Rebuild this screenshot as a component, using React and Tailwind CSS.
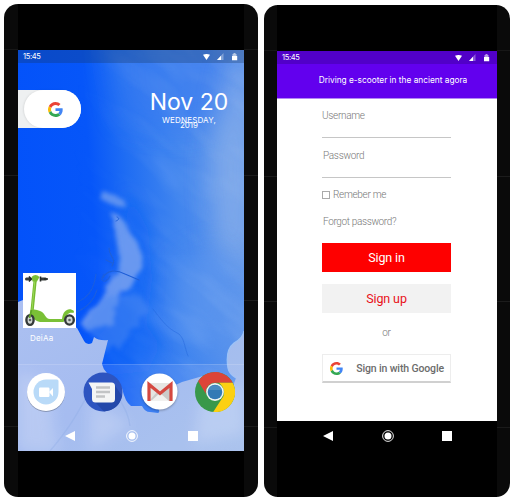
import React from 'react';

function GoogleG({ className }) {
  return (
    <svg viewBox="0 0 48 48" className={className}>
      <path fill="#EA4335" d="M24 9.5c3.54 0 6.71 1.22 9.21 3.6l6.85-6.85C35.9 2.38 30.47 0 24 0 14.62 0 6.51 5.38 2.56 13.22l7.98 6.19C12.43 13.72 17.74 9.5 24 9.5z" />
      <path fill="#4285F4" d="M46.98 24.55c0-1.57-.15-3.09-.38-4.55H24v9.02h12.94c-.58 2.96-2.26 5.48-4.78 7.18l7.73 6c4.51-4.18 7.09-10.36 7.09-17.65z" />
      <path fill="#FBBC05" d="M10.53 28.59A14.5 14.5 0 0 1 9.77 24c0-1.6.27-3.14.76-4.59l-7.98-6.19A23.9 23.9 0 0 0 0 24c0 3.88.92 7.54 2.56 10.78l7.97-6.19z" />
      <path fill="#34A853" d="M24 48c6.48 0 11.93-2.13 15.89-5.81l-7.73-6c-2.15 1.45-4.92 2.3-8.16 2.3-6.26 0-11.57-4.22-13.47-9.91l-7.98 6.19C6.51 42.62 14.62 48 24 48z" />
    </svg>
  );
}

function StatusBar({ className }) {
  return (
    <div className={`relative flex h-[13px] shrink-0 items-center justify-between text-white ${className}`}>
      <span className="text-[7.5px] leading-none font-[Inter,sans-serif] tracking-[-0.35px]">15:45</span>
      <svg viewBox="0 0 35 8" className="h-2 w-[35px]">
        <path fill="#fff" d="M0 1.8Q3.5 0 7 1.8L3.5 7z" />
        <path fill="#fff" opacity=".35" d="M20.5 0v7H14z" />
        <path fill="#fff" d="M18 2.8V7h-4z" />
        <path fill="#fff" opacity=".6" d="M29.5 1h1V0h2v1h1v2h-4z" />
        <path fill="#fff" d="M29 3h5.2v4.3H29z" />
      </svg>
    </div>
  );
}

function NavBar({ className }) {
  return (
    <div className={`relative flex shrink-0 items-center justify-between ${className}`}>
      <svg viewBox="0 0 10 10" className="size-[10px]"><path fill="#fff" d="M10 0v10L0 5z" /></svg>
      <svg viewBox="0 0 12 12" className="size-3">
        <circle cx="6" cy="6" r="5.4" fill="none" stroke="#fff" strokeWidth=".9" />
        <circle cx="6" cy="6" r="3.5" fill="#fff" />
      </svg>
      <div className="size-[10px] bg-white" />
    </div>
  );
}

function Seams() {
  return (
    <div className="absolute inset-0 flex flex-col pt-[45px]">
      <div className="h-[126px] shrink-0 border-t border-[#171717]" />
      <div className="h-[125px] shrink-0 border-t border-[#1c1c1c]" />
      <div className="h-[126px] shrink-0 border-t border-[#1c1c1c]" />
      <div className="border-t border-[#1a1a1a]" />
    </div>
  );
}

function Wallpaper() {
  return (
    <svg viewBox="18 50 226 401" className="absolute inset-0 size-full">
      <defs>
        <linearGradient id="sea" x1="0" y1=".5" x2="1" y2=".36">
          <stop offset="0" stopColor="#0352fa" />
          <stop offset=".34" stopColor="#0656f9" />
          <stop offset=".5" stopColor="#1f6df3" />
          <stop offset=".7" stopColor="#3f84ef" />
          <stop offset="1" stopColor="#6499ea" />
        </linearGradient>
        <linearGradient id="sand" x1="0" y1="0" x2="1" y2="1">
          <stop offset="0" stopColor="#acc0f1" />
          <stop offset=".5" stopColor="#a3bbef" />
          <stop offset="1" stopColor="#a9c3ec" />
        </linearGradient>
        <filter id="wisp" x="-30%" y="-30%" width="160%" height="160%">
          <feTurbulence type="fractalNoise" baseFrequency=".06" numOctaves="3" seed="5" result="n" />
          <feDisplacementMap in="SourceGraphic" in2="n" scale="14" />
          <feGaussianBlur stdDeviation="2.2" />
        </filter>
        <filter id="soft" x="-20%" y="-20%" width="140%" height="140%"><feGaussianBlur stdDeviation=".5" /></filter>
        <filter id="b4" x="-60%" y="-60%" width="220%" height="220%"><feGaussianBlur stdDeviation="7" /></filter>
        <filter id="b12" x="-80%" y="-50%" width="260%" height="200%"><feGaussianBlur stdDeviation="14" /></filter>
        <filter id="streaks" x="0" y="0" width="100%" height="100%">
          <feTurbulence type="fractalNoise" baseFrequency=".012 .04" numOctaves="3" seed="8" />
          <feColorMatrix values="0 0 0 0 .72  0 0 0 0 .83  0 0 0 0 1  1.6 0 0 0 -.65" />
        </filter>
        <linearGradient id="fade" x1="0" x2="1">
          <stop offset=".22" stopColor="#000" />
          <stop offset=".7" stopColor="#fff" />
        </linearGradient>
        <mask id="east" maskUnits="userSpaceOnUse" x="18" y="50" width="226" height="401">
          <path fill="url(#fade)" d="M18 50h226v401H18z" />
        </mask>
      </defs>
      <path fill="url(#sea)" d="M18 50h226v401H18z" />
      <path fill="#3a7cf0" filter="url(#b12)" d="M110 40h134v70l-60 20-60-10z" opacity=".6" />
      <path fill="#0f63f6" filter="url(#b4)" d="M128 190l20 40 4 50-6 45 14 20-12 26-40 4-16-30 16-20 16-50z" opacity=".6" />
      <path fill="#87aeea" filter="url(#b12)" d="M236 50h12v220l-30-20-6-90z" opacity=".9" />
      <path fill="#6098ee" filter="url(#b12)" d="M180 265l40-20 20 60-15 45-35-10-20-40z" opacity=".6" />
      <g mask="url(#east)" opacity=".16">
        <g transform="rotate(38 131 250)">
          <path d="M-150 -30h560v560h-560z" filter="url(#streaks)" />
        </g>
      </g>
      <path fill="#75a0f0" filter="url(#wisp)" d="M100 189c8 3 14 8 24 11l4 8c-9-1-18-3-27-9z" opacity=".75" />
      <path fill="#84a8ef" filter="url(#wisp)" d="M110 212c10 2 15 10 20 20 8 10 14 22 11 38-4 14-12 16-20 24-6 10-2 20-12 30l-22 6-6-6c12-8 20-20 22-32 4-14 16-20 17-34-2-18-6-26-10-46z" opacity=".75" />
      <path fill="#4b88f1" filter="url(#wisp)" d="M84 328c10-8 18-20 24-30l30-5 10 16-26 36-16 8-8-14z" opacity=".5" />
      <g fill="none" stroke="#1f5fd8" strokeLinecap="round" filter="url(#soft)">
        <path d="M103 278c4-9 14-8 22-4l14 6" strokeWidth="1.1" />
        <path d="M109 248c0 9 8 10 3 18M106 260l6 3" strokeWidth="1.2" />
        <path d="M117 217c3 1 2 3-1 4" strokeWidth="1" />
        <path d="M153 309c10 13 14 19 26 25 6 6 5 12 9 22" strokeWidth=".8" opacity=".5" />
        <path d="M78 302c12-6 16-14 18-28M77 312c11-5 17-12 20-22M104 274c-6 8 2 10 6 2" strokeWidth="1.2" opacity=".75" />
      </g>
      <path fill="url(#sand)" d="M18 302L23 300L77 328L83 339Q86 346 92 343L94 337Q99 341 108 340L105 352L102 364Q103 369 107 373Q117 380 122 388Q125 402 131 406L142 406Q145 412 150 412L158 413Q161 412 157 407Q156 403 162 398Q171 386 182 382L210 374L233 386L236 378Q229 374 228 368Q225 350 234 343Q243 338 244 331V451H18z" />
      <path fill="none" stroke="#9cc2f6" strokeWidth="1.3" d="M244 331Q243 338 234 343Q225 350 228 368Q229 374 236 378" />
      <g fill="#fff" filter="url(#b4)" opacity=".22">
        <path d="M18 372l30 10 10 70H18zM90 400l40 24-40 27zM200 400l44-16v50l-50 10z" />
      </g>
      <path fill="#b7c9f5" opacity=".14" d="M18 364h226v87H18z" />
      <path fill="none" stroke="#8aa9e4" opacity=".3" filter="url(#soft)" strokeWidth="1.5" d="M50 451c22-26 28-39 41-62M118 396c6 12 10 16 12 30" />
    </svg>
  );
}

function Scooter() {
  return (
    <svg viewBox="23 273 53 55" className="h-[55px] w-[53px] bg-white">
      <path fill="none" stroke="#76bb31" strokeWidth="3.2" d="M35.5 277L31 321" />
      <path fill="none" stroke="#9bd857" strokeWidth="1" d="M35 279L31.5 315" />
      <path fill="#7ac036" d="M31.5 277q4-4 8 0l-2.5 4.5h-4.5zM31 311c2-3 6-1 9 0 5 1 5 8 10 8h12c1-9 7-12 12-8l-.5 2c-5-1-7 2-8 6l-2 3H40c-5-1-6-4-9-6z" />
      <path stroke="#393e3c" strokeWidth="3" strokeLinecap="round" d="M26.5 279h4M41.5 279h4" />
      <path stroke="#262b2a" strokeWidth="1.6" d="M29 276.5l2 2.5-2 2.500M40.500 276.500v5M44 279h4" fill="none" />
      <ellipse cx="30" cy="320" rx="3.6" ry="4.9" fill="#d2d7d3" stroke="#343a39" strokeWidth="2.4" />
      <ellipse cx="69.5" cy="320" rx="4.3" ry="4.6" fill="#d2d7d3" stroke="#343a39" strokeWidth="2.4" />
      <circle cx="30" cy="320" r="1.3" fill="#5b6461" /><circle cx="69.5" cy="320" r="1.3" fill="#5b6461" />
      <path stroke="#60a526" strokeWidth="1.8" d="M29.5 318l2-8" />
    </svg>
  );
}

function DuoIcon() {
  return (
    <svg viewBox="0 0 40 40" className="size-10 drop-shadow-[0_1px_0.5px_rgba(0,0,0,0.25)]">
      <circle cx="20" cy="19" r="19" fill="#fff" />
      <path fill="#b9daf8" d="M20 6.5h11q1.5 0 1.5 1.5v11A12.5 12.5 0 1 1 20 6.5z" />
      <rect x="13" y="14.5" width="10.5" height="9.5" rx="1.2" fill="#fff" />
      <path fill="#fff" d="M23 19l4-4v8.5z" />
    </svg>
  );
}

function MessagesIcon() {
  return (
    <svg viewBox="0 0 40 40" className="size-10 overflow-visible">
      <circle cx="20" cy="19" r="19.5" fill="#2d54c0" />
      <path fill="#2348aa" d="M11 28l10 10.4Q36 37 39 23L31 11z" />
      <path fill="#f4f5f5" d="M5.5 9.5H28.5q3.5 0 3.5 3.5v13q0 3.5-3.5 3.5H12.5q-3.5 0-3.5-3.5V16z" />
      <path stroke="#c2c4c5" strokeWidth="2.3" d="M13 14.5h14M13 19h14M13 23.5h9" />
    </svg>
  );
}

function GmailIcon() {
  return (
    <svg viewBox="0 0 40 40" className="size-10 drop-shadow-[0_1px_1px_rgba(0,0,0,0.3)]">
      <circle cx="19.5" cy="18.5" r="18" fill="#fff" />
      <path fill="#e5e5e2" d="M9 10h22v18H9z" />
      <path fill="#cbcbc9" d="M9 11l11 10L31 11v17H20L10 27l7-8z" />
      <path fill="#f1f1ef" d="M11 28l9-8 9 8z" />
      <path fill="none" stroke="#d54840" strokeWidth="3.2" d="M9 28V11.5L20 20.5l11-9V28" />
    </svg>
  );
}

function ChromeIcon() {
  return (
    <svg viewBox="0 0 40 40" className="-mt-[2px] mr-[2px] -ml-[2px] size-10">
      <circle cx="20" cy="20" r="20" fill="#38984a" />
      <path fill="#dd4438" d="M3.2 9.2A20 20 0 0 1 37.7 10.8H20a9.3 9.3 0 0 0-9 11.3z" />
      <path fill="#fbd012" d="M37.7 10.8A20 20 0 0 1 18.2 40L28.4 24.2Q31 17 24 10.8z" />
      <circle cx="20" cy="20" r="8.9" fill="#eef4f4" />
      <circle cx="20" cy="20" r="7.3" fill="#327ab5" />
      <path fill="#5b96c8" d="M13.2 18a7.2 7.2 0 0 1 13.6 0z" opacity=".6" />
    </svg>
  );
}

function HomePhone() {
  return (
    <div className="relative mt-1 flex h-[493px] w-[254px] justify-center overflow-hidden rounded-[14px] bg-[#0a0a0a]">
      <Seams />
      <div className="relative h-full w-[226px] bg-black pt-[46px]">
        <div className="relative flex h-[401px] flex-col overflow-hidden">
          <Wallpaper />
          <StatusBar className="bg-[#17345c]/30 pr-[6px] pl-[5px]" />
          <div className="relative mt-[27px] flex h-[183px] shrink-0 items-start justify-between pr-[15px]">
            <div className="flex h-[38px] w-[63px] justify-end rounded-r-full bg-[#eef0f1]">
              <div className="flex w-[57px] items-center justify-center rounded-full bg-white pl-[6px] shadow-[-1px_0_2px_rgba(0,0,0,0.08)]">
                <GoogleG className="size-[15px]" />
              </div>
            </div>
            <div className="flex w-[80px] flex-col items-center font-[Inter,sans-serif] text-white">
              <div className="text-[23px] leading-[25px] whitespace-nowrap">Nov 20</div>
              <div className="pt-px text-[8px] leading-[8px] whitespace-nowrap tracking-[0.15px]">WEDNESDAY,</div>
              <div className="-mt-[3px] text-[8px] leading-[8px]">2019</div>
            </div>
          </div>
          <div className="relative flex h-[91px] shrink-0 flex-col items-start pl-[5px]">
            <Scooter />
            <div className="mt-[5px] ml-[7px] text-[8px] leading-[10px] tracking-[0.2px] text-white font-[Inter,sans-serif]">DeiAa</div>
          </div>
          <div className="relative flex h-[57px] shrink-0 items-center justify-between border-t border-white/15 pr-[7px] pl-2">
            <DuoIcon /><MessagesIcon /><GmailIcon /><ChromeIcon />
          </div>
          <NavBar className="h-[30px] pr-[46px] pl-[47px]" />
        </div>
      </div>
    </div>
  );
}

function LoginPhone() {
  return (
    <div className="relative mt-[5px] flex h-[492px] w-[246px] justify-center overflow-hidden rounded-[14px] bg-[#0a0a0a]">
      <Seams />
      <div className="relative flex h-full w-[220px] flex-col bg-black pt-[46px] font-[Roboto,sans-serif]">
        <StatusBar className="bg-[#5100c8] pr-[7px] pl-[5px]" />
        <div className="flex h-[35px] shrink-0 items-center justify-center border-b border-[#b387f5] bg-[#6200ee] pb-[2px] pl-[12px] text-[8.3px] whitespace-nowrap text-white font-[Inter,sans-serif]">
          <span>Driving e-scooter in the ancient agora</span>
        </div>
        <div className="flex h-[322px] shrink-0 flex-col bg-white pr-[46px] pl-[45px] text-[10px] font-light tracking-[-0.35px] text-[#777]">
          <div className="h-[39px] shrink-0 border-b border-[#c6c6c6] pt-[11px] leading-[12px]"><span className="tracking-[-0.3px]">Username</span></div>
          <div className="h-10 shrink-0 border-b border-[#c6c6c6] pt-3 leading-[12px]"><span className="ml-px tracking-[-0.3px]">Password</span></div>
          <div className="mt-[10px] flex h-3 shrink-0 items-center gap-[3px]">
            <div className="mt-[1px] size-2 border border-[#aaa]" />
            <span className="whitespace-nowrap tracking-[-0.3px]">Remeber me</span>
          </div>
          <div className="mt-[16px] h-3 shrink-0 leading-[12px]"><span className="ml-px">Forgot password?</span></div>
          <div className="mt-[15px] flex h-[29px] shrink-0 items-center justify-center bg-[#fe0000] pt-[2px] text-[12.5px] font-normal tracking-[-0.1px] text-white">Sign in</div>
          <div className="mt-3 flex h-[29px] shrink-0 items-center justify-center bg-[#f2f2f2] pt-[2px] text-[12.5px] font-normal tracking-[-0.1px] text-[#e91118]">Sign up</div>
          <div className="mt-[14px] h-3 shrink-0 text-center leading-[12px]">or</div>
          <div className="mt-[15px] flex h-[29px] shrink-0 items-center justify-between border border-b-2 border-[#ededed] border-b-[#d0d0d0] pr-[6px] pl-[7px]">
            <GoogleG className="size-[13px]" />
            <span className="mt-[2px] text-[10.5px] font-medium tracking-[-0.13px] whitespace-nowrap text-[#6c6c6c]">Sign in with Google</span>
          </div>
        </div>
        <NavBar className="h-[30px] pr-[45px] pl-[46px]" />
      </div>
    </div>
  );
}

export default function App() {
  return (
    <div className="flex h-[501px] w-[514px] items-start gap-[6px] overflow-hidden bg-white pl-1">
      <HomePhone />
      <LoginPhone />
    </div>
  );
}
